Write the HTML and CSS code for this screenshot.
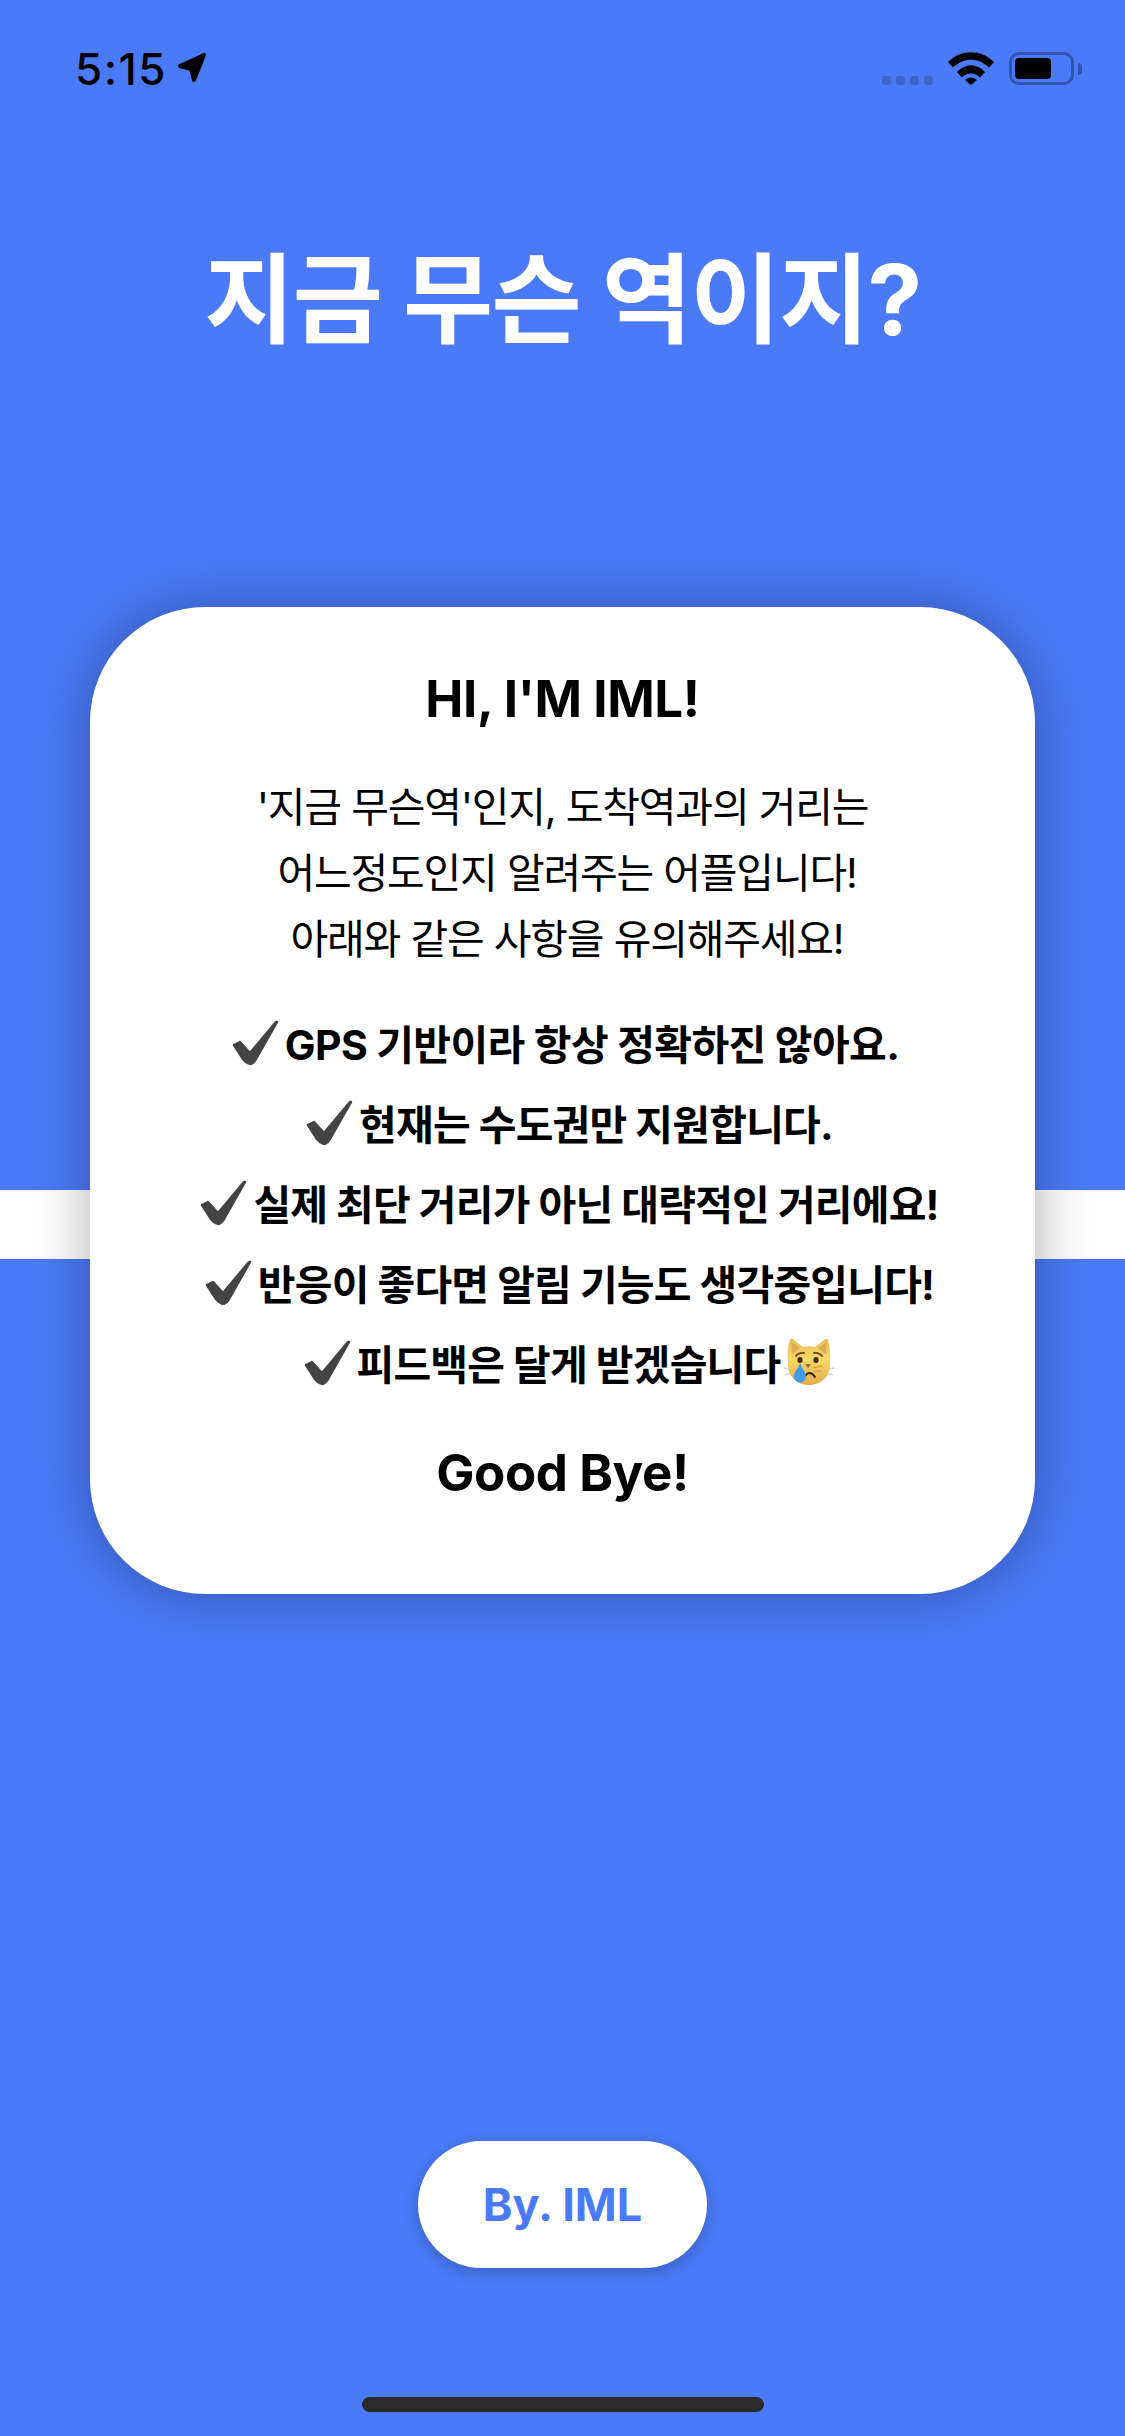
FILE: index.html
```html
<!DOCTYPE html>
<html lang="ko">
	<head>
		<meta charset="utf-8">
		<title>지금 무슨 역이지?</title>
		<link rel="stylesheet" href="styles.css">
	</head>
	<body>
		<main class="page">
			<div class="status">
				<div class="status-left">
					<span class="time">5:15</span>
					<svg class="arrow" width="30" height="30" viewBox="0 0 30 30"><path d="M27 2 3 13 14 16 17 27Z"/></svg>
				</div>
				<div class="status-right">
					<div class="dots"><i></i><i></i><i></i><i></i></div>
					<svg class="wifi" width="46" height="33" viewBox="0 0 46 33">
						<path d="M0 10C13-3 33-3 46 10L41 15.500C30 5 16 5 5 15.500Z"/>
						<path d="M9 20C17 11 29 11 37 20L32 25.500C27 20 19 20 14 25.500Z"/>
						<path d="M17 28C20 24.500 26 24.500 29 28L23 33Z"/>
					</svg>
					<div class="battery"><div class="battery-fill"></div></div>
					<div class="battery-nub"></div>
				</div>
			</div>
			<h1 class="title">지금 무슨 역이지?</h1>
			<section class="card-wrap">
				<div class="band"></div>
				<div class="card">
					<h2 class="card-head">HI, I'M IML!</h2>
					<div class="intro">
						<p>'지금 무슨역'인지, 도착역과의 거리는</p>
						<p class="intro-shift">어느정도인지 알려주는 어플입니다!</p>
						<p class="intro-shift">아래와 같은 사항을 유의해주세요!</p>
					</div>
					<ul class="notes">
						<li class="note-gps"><svg class="check" viewBox="0 0 47 46"><path d="M2 26 8 23 18 34 44 3 45 3 24 40Q21 45 18 45 14 44 11 40Z"/></svg>GPS 기반이라 항상 정확하진 않아요.</li>
						<li><svg class="check" viewBox="0 0 47 46"><path d="M2 26 8 23 18 34 44 3 45 3 24 40Q21 45 18 45 14 44 11 40Z"/></svg>현재는 수도권만 지원합니다.</li>
						<li><svg class="check" viewBox="0 0 47 46"><path d="M2 26 8 23 18 34 44 3 45 3 24 40Q21 45 18 45 14 44 11 40Z"/></svg>실제 최단 거리가 아닌 대략적인 거리에요!</li>
						<li><svg class="check" viewBox="0 0 47 46"><path d="M2 26 8 23 18 34 44 3 45 3 24 40Q21 45 18 45 14 44 11 40Z"/></svg>반응이 좋다면 알림 기능도 생각중입니다!</li>
						<li><svg class="check" viewBox="0 0 47 46"><path d="M2 26 8 23 18 34 44 3 45 3 24 40Q21 45 18 45 14 44 11 40Z"/></svg>피드백은 달게 받겠습니다<svg class="cat" viewBox="0 0 52 48">
							<defs>
								<linearGradient id="fur" x1="0" y1="0" x2="0" y2="1"><stop offset="0" stop-color="#e8bf5a"/><stop offset=".45" stop-color="#f7d765"/><stop offset="1" stop-color="#e2ab48"/></linearGradient>
							</defs>
							<path d="M1 30 9 32M2 37 9 35M51 30 43 32M50 37 43 35" fill="none" stroke="#d8d4c8" stroke-width="1.500"/>
							<path d="M7 1Q9 0 11 2L20 9C24 8 28 8 32 9L41 2Q43 0 45 1 48 14 47 24C48 38 38 47 26 47 14 47 4 38 5 24 4 14 5 8 7 1Z" fill="url(#fur)"/>
							<path d="M8 4 17 10 9 16ZM44 4 35 10 43 16Z" fill="#d09a48" opacity=".6"/>
							<path d="M13 18Q16 14 21 15M39 18Q36 14 31 15" fill="none" stroke="#6a4520" stroke-width="1.800" stroke-linecap="round"/>
							<ellipse cx="17" cy="22" rx="2.600" ry="3" fill="#3e2a14"/><ellipse cx="33" cy="22" rx="2.600" ry="3" fill="#3e2a14"/>
							<path d="M22.500 26H27.500Q28 27 25 30 22 27 22.500 26Z" fill="#a06a48"/>
							<path d="M21 39Q27 31 32 39" fill="none" stroke="#3e2a14" stroke-width="2" stroke-linecap="round"/>
							<path d="M30 30 39 28M31 33 39 33" fill="none" stroke="#c8963e" stroke-width="1"/>
							<path d="M17 25C19 31 23 34 23 38.500A6 6 0 0 1 11 38.500C11 34 15 31 17 25Z" fill="#3f9be8"/>
						</svg></li>
					</ul>
					<h2 class="card-foot">Good Bye!</h2>
				</div>
			</section>
			<div class="by">By. IML</div>
			<div class="home"></div>
		</main>
	</body>
</html>
```

FILE: styles.css
```css
:root{
	--blue:#4a7af8;
	--cjk:Inter,'Noto Sans CJK KR',sans-serif;
}
*{
	box-sizing:border-box;
}
body{
	background-color:var(--blue);
	color:#000;
	font-family:var(--cjk);
	margin:0;
}
.page{
	align-items:center;
	display:flex;
	flex-direction:column;
	height:2436px;
	overflow:hidden;
}
.status{
	display:flex;
	height:86px;
	justify-content:space-between;
	margin-top:52px;
	padding:0 43px 0 75px;
	width:100%;
}
.status-left{
	align-items:flex-start;
	display:flex;
	gap:10px;
}
.time{
	font-size:44px;
	font-weight:500;
	letter-spacing:1.5px;
	line-height:34px;
}
.arrow{
	fill:#000;
	margin-top:1px;
	stroke:#000;
	stroke-linejoin:round;
	stroke-width:4px;
}
.status-right{
	align-items:flex-start;
	display:flex;
}
.dots{
	display:flex;
	gap:5px;
	margin:24px 15px 0 0;
}
.dots i{
	background-color:#3d66cc;
	border-radius:3px;
	height:9px;
	width:9px;
}
.wifi{
	margin-right:15px;
}
.battery{
	border:3px solid #2f55b0;
	border-radius:10px;
	height:33px;
	padding:3px;
	width:65px;
}
.battery-fill{
	background-color:#000;
	border-radius:4px;
	height:100%;
	width:36px;
}
.battery-nub{
	background-color:#2f55b0;
	border-radius:0 6px 6px 0;
	height:12px;
	margin:11px 0 0 4px;
	width:4px;
}
.title{
	color:#fff;
	font-size:98px;
	font-weight:700;
	letter-spacing:-1.6px;
	line-height:120px;
	margin:102px 0 0;
}
.card-wrap{
	margin-top:247px;
	position:relative;
	width:945px;
}
.band{
	background-color:#fff;
	height:69px;
	left:-90px;
	position:absolute;
	top:583px;
	width:1125px;
}
.card{
	align-items:center;
	background-color:#fff;
	border-radius:115px;
	box-shadow:0 0 55px rgba(0,0,0,.32);
	display:flex;
	flex-direction:column;
	height:987px;
	padding-top:62px;
	position:relative;
}
.card-head,.card-foot{
	font-size:51px;
	font-weight:700;
	letter-spacing:-.4px;
	line-height:60px;
	margin:0;
}
.intro{
	font-size:41px;
	letter-spacing:-1.2px;
	line-height:66px;
	margin-top:45px;
	text-align:center;
}
.intro p{
	margin:0;
}
.intro .intro-shift{
	padding-left:9px;
}
.notes{
	font-size:41px;
	font-weight:700;
	letter-spacing:-.8px;
	list-style:none;
	margin:30px 0 0;
	padding:0;
}
.notes li{
	align-items:center;
	display:flex;
	gap:6px;
	height:80px;
	justify-content:center;
	padding-left:14px;
}
.notes .note-gps{
	letter-spacing:-.6px;
	padding-left:6px;
}
.check{
	fill:#444;
	height:46px;
	stroke:#444;
	stroke-linejoin:round;
	stroke-width:2.5px;
	width:47px;
}
.cat{
	height:48px;
	margin-left:-3px;
	width:52px;
}
.card-foot{
	margin-top:41px;
}
.by{
	align-items:center;
	background-color:#fff;
	border-radius:64px;
	box-shadow:0 4px 16px rgba(0,0,0,.22);
	color:var(--blue);
	display:flex;
	font-size:45px;
	font-weight:700;
	height:127px;
	justify-content:center;
	margin-top:547px;
	width:289px;
}
.home{
	background-color:#2a2a2a;
	border-radius:8px;
	height:15px;
	margin-top:129px;
	width:402px;
}
```
